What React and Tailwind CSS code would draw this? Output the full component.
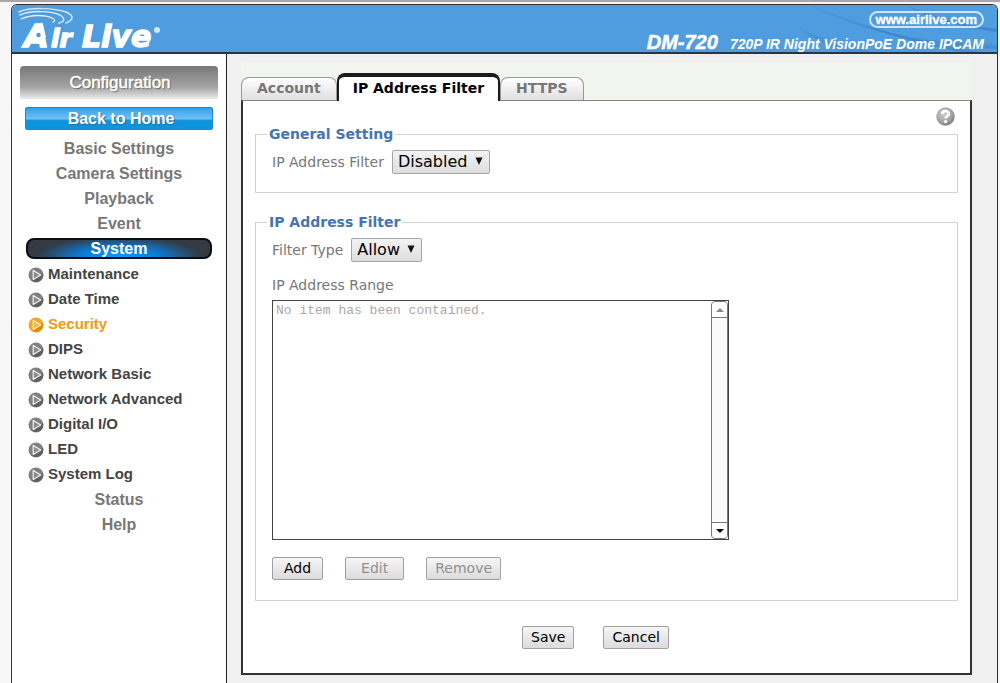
import { useState } from "react";

const SUB_ITEMS = [
  "Maintenance",
  "Date Time",
  "Security",
  "DIPS",
  "Network Basic",
  "Network Advanced",
  "Digital I/O",
  "LED",
  "System Log",
];

function Logo() {
  return (
    <svg viewBox="0 0 150 46" className="h-[46px] w-[150px] overflow-visible" role="img" aria-label="Air Live">
      <g fill="none" stroke="#fff" strokeLinecap="round">
        <path d="M1 7 C12 2 36 3 48 7 C57 11 55 15 48 18" strokeWidth="1.5" opacity="0.75" />
        <path d="M2 10 C14 5 34 6 42 10 C48 14 46 17 41 18" strokeWidth="1.5" opacity="0.8" />
        <path d="M3 14 C14 9 28 10 34 13 C38 15 37 16 35 17" strokeWidth="1.3" opacity="0.85" />
      </g>
      <g fill="#fff" stroke="#fff" strokeWidth="1.4" fontFamily="'DejaVu Sans', Verdana, sans-serif" fontWeight="700" fontStyle="italic">
        <text x="6" y="42" fontSize="32">A</text>
        <text x="33" y="42" fontSize="25">ir</text>
        <text x="64" y="42" fontSize="30">Live</text>
      </g>
      <path d="M15 32 L24 17 L28 32 Z" fill="#fff" />
      <circle cx="20" cy="31" r="5" fill="#fff" />
      <circle cx="20.5" cy="30" r="2.2" fill="#4b97d8" />
      <circle cx="139" cy="25" r="3" fill="#fff" opacity="0.75" />
    </svg>
  );
}

function Header() {
  return (
    <header className="relative flex h-[49px] justify-between border-b-2 border-[#24364a] bg-[#4f9ddf]">
      <svg viewBox="0 0 200 47" className="absolute top-0 right-0 h-[47px] w-[200px]" aria-hidden="true">
        <g fill="#3279c9">
          <path d="M12 0 Q95 34 200 50 L180 50 Q80 32 12 0Z" opacity="0.45" />
          <path d="M108 0 Q150 18 200 24 L200 27 Q145 20 108 0Z" opacity="0.6" />
          <path d="M0 22 Q50 48 110 50 L60 50 Q30 44 0 22Z" opacity="0.3" />
          <path d="M70 21 Q120 38 200 40 L200 44 Q120 42 70 21Z" opacity="0.35" />
        </g>
      </svg>
      <div className="relative pl-[6px]">
        <Logo />
      </div>
      <div className="relative flex flex-col items-end pt-[6px] pr-[13px] font-['Liberation_Sans',Arial,sans-serif] text-white">
        <a
          href="#airlive"
          className="flex h-[17px] items-center rounded-full border-2 border-[#cfe6fa] px-[5px] text-[13px] font-bold [-webkit-text-stroke:0.3px_white]"
        >
          www.airlive.com
        </a>
        <h1 className="flex items-baseline gap-3 font-bold italic">
          <span className="text-[20px] leading-[28px] [-webkit-text-stroke:0.5px_white]">DM-720</span>
          <span className="text-[14px]">720P IR Night VisionPoE Dome IPCAM</span>
        </h1>
      </div>
    </header>
  );
}

function Bullet({ active }) {
  return (
    <svg viewBox="0 0 16 16" className="size-4 shrink-0" aria-hidden="true">
      <circle cx="8" cy="8" r="7.5" fill={active ? "#f9a51c" : "#808080"} />
      <path d="M3 13 A7.5 7.5 0 0 0 13 13 A7.5 7.5 0 0 0 15 6 Z" fill={active ? "#e58a00" : "#606060"} />
      <path d="M5.2 3.4 L12.8 8 L5.2 12.6 Z" fill={active ? "#fbb940" : "#8c8c8c"} stroke="#f1f1f1" strokeWidth="1.2" strokeLinejoin="round" />
    </svg>
  );
}

function MainLink({ children }) {
  return (
    <li>
      <a href="#section" className="flex h-[25px] items-center justify-center text-[16px] font-bold text-[#777]">
        {children}
      </a>
    </li>
  );
}

function Sidebar() {
  return (
    <nav className="w-[215px] shrink-0 border-r border-[#222] bg-white font-['Liberation_Sans',Arial,sans-serif]">
      <div className="mx-2 mt-[12px] flex h-[33px] items-center justify-center rounded-t bg-linear-to-b from-[#777] via-[#a6a6a6] via-65% to-[#ececec] pl-[2px] text-[17px] text-white [-webkit-text-stroke:0.5px_white] [text-shadow:1px_1px_1px_#555]">
        Configuration
      </div>
      <a
        href="#home"
        className="mx-[13px] mt-2 flex h-[23px] items-center justify-center rounded-xs border border-[#1a86d0] bg-linear-to-b from-[#2ba1ec] from-0% via-[#6cc0f2] via-50% to-[#0e94dd] to-60% pl-1 text-[16px] font-bold text-white [text-shadow:1px_1px_1px_#2a6ca0]"
      >
        Back to Home
      </a>
      <ul className="mt-[6px]">
        <MainLink>Basic Settings</MainLink>
        <MainLink>Camera Settings</MainLink>
        <MainLink>Playback</MainLink>
        <MainLink>Event</MainLink>
        <li>
          <div className="flex h-[25px] items-center px-[14px]">
            <a
              href="#system"
              className="flex h-[21px] w-full items-center justify-center rounded-lg border-2 border-[#0a0d12] bg-[radial-gradient(ellipse_45%_120%_at_50%_100%,#0a9bff_0%,#0d78d0_50%,#333a42_100%)] text-[16px] font-bold text-white"
            >
              System
            </a>
          </div>
          <ul className="pt-px">
            {SUB_ITEMS.map((name) => (
              <li key={name}>
                <a
                  href="#item"
                  className={
                    name === "Security"
                      ? "flex h-[25px] items-center gap-1 pl-4 text-[15px] font-bold text-[#f59a0c]"
                      : "flex h-[25px] items-center gap-1 pl-4 text-[15px] font-bold text-[#444]"
                  }
                >
                  <Bullet active={name === "Security"} />
                  {name}
                </a>
              </li>
            ))}
          </ul>
        </li>
        <MainLink>Status</MainLink>
        <MainLink>Help</MainLink>
      </ul>
    </nav>
  );
}

function SelectBox({ id, options }) {
  return (
    <span className="relative inline-flex">
      <select
        id={id}
        className="h-6 appearance-none rounded-xs border border-[#a5a5a5] bg-linear-to-b from-[#f3f3f3] to-[#dedede] pr-[21px] pl-[5px] text-[16px] leading-[22px] text-black"
      >
        {options.map((o) => (
          <option key={o}>{o}</option>
        ))}
      </select>
      <svg viewBox="0 0 8 8" className="pointer-events-none absolute top-[7px] right-[7px] size-2" aria-hidden="true">
        <path d="M0.5 0.5 H7.5 L4 8 Z" fill="#111" />
      </svg>
    </span>
  );
}

const BUTTON_PADDING = { tight: "px-2", normal: "px-[11px]", wide: "px-[15px]" };

function Button({ children, disabled, size = "tight" }) {
  return (
    <button
      type="button"
      disabled={disabled}
      className={`${BUTTON_PADDING[size]} h-[23px] rounded-xs border border-[#a0a0a0] bg-linear-to-b from-[#f6f6f6] to-[#dcdcdc] text-[14px] leading-[21px] text-black disabled:text-[#919191]`}
    >
      {children}
    </button>
  );
}

function Tabs() {
  const [active, setActive] = useState("IP Address Filter");
  return (
    <div role="tablist" className="flex items-end bg-[#f2f4ef] text-[14px] leading-[18px] font-bold">
      {["Account", "IP Address Filter", "HTTPS"].map((name) => (
        <button
          key={name}
          type="button"
          role="tab"
          aria-selected={active === name}
          onClick={() => setActive(name)}
          className={
            active === name
              ? "-mb-px h-[28px] rounded-t-lg border-x-2 border-t-4 border-[#1a1a1a] bg-white px-[14px] pb-[2px] text-black"
              : "h-[23px] rounded-t-lg border border-b-0 border-[#999] bg-linear-to-b from-white to-[#dfdfe3] px-[15px] pb-[2px] text-[#777]"
          }
        >
          {name}
        </button>
      ))}
    </div>
  );
}

function ListBox() {
  return (
    <div className="flex h-[240px] w-[457px] border border-[#444]">
      <select
        id="range"
        size={10}
        className="min-w-0 flex-1 appearance-none overflow-hidden bg-white font-['Liberation_Mono','Courier_New',monospace] text-[13px] text-[#aaa]"
      >
        <option disabled className="px-[3px] py-[2px] text-[#aaa]">
          No item has been contained.
        </option>
      </select>
      <div className="flex w-[17px] flex-col justify-between rounded-sm border border-[#777] bg-[#fafafa]">
        <button type="button" aria-label="Scroll up" className="flex h-4 items-center justify-center rounded-t-sm border-b border-[#777] bg-white">
          <svg viewBox="0 0 8 4" className="h-1 w-2"><path d="M4 0 L8 4 H0 Z" fill="#888" /></svg>
        </button>
        <button type="button" aria-label="Scroll down" className="flex h-4 items-center justify-center rounded-b-sm border-t border-[#777] bg-white">
          <svg viewBox="0 0 8 4" className="h-1 w-2"><path d="M0 0 H8 L4 4 Z" fill="#000" /></svg>
        </button>
      </div>
    </div>
  );
}

function HelpButton() {
  return (
    <button type="button" aria-label="Help" className="mr-[3px] block size-[19px]">
      <svg viewBox="0 0 19 19" className="size-full" aria-hidden="true">
        <defs>
          <radialGradient id="ball" cx="40%" cy="35%" r="65%">
            <stop offset="0" stopColor="#cdcdcd" />
            <stop offset="0.7" stopColor="#a2a2a2" />
            <stop offset="1" stopColor="#808080" />
          </radialGradient>
        </defs>
        <circle cx="9.5" cy="9.5" r="9.2" fill="url(#ball)" />
        <path d="M6.2 7 C6.2 3.2 12.8 3.2 12.8 6.8 C12.8 9.2 9.6 9 9.6 11.6" fill="none" stroke="#fff" strokeWidth="2.6" />
        <circle cx="9.6" cy="14.6" r="1.6" fill="#fff" />
      </svg>
    </button>
  );
}

export default function App() {
  return (
    <div className="flex min-h-screen flex-col border-t-2 border-[#aaa5aa] bg-[#f7f7f7] pt-[2px] pr-[2px] pl-[11px]">
      <div className="flex flex-1 flex-col overflow-hidden rounded-t-md border border-b-0 border-[#333] bg-[#f0f0f0]">
        <Header />
        <div className="flex flex-1">
          <Sidebar />
          <main className="min-w-0 flex-1 pt-2 pr-[25px] pb-[9px] pl-[14px] font-['DejaVu_Sans',Verdana,sans-serif] text-[14px] text-[#777]">
            <div className="bg-[#f2f4ef] pt-[11px]">
              <Tabs />
            </div>
            <section className="border-2 border-t border-[#333] border-t-[#8f857d] bg-white px-3 pt-[6px] pb-6">
              <div className="flex justify-end">
                <HelpButton />
              </div>
              <fieldset className="border border-[#d0d0d0] pb-[18px] pl-4">
                <legend className="-ml-[5px] px-[2px] text-[14px] leading-4 font-bold text-[#4673b4]">General Setting</legend>
                <div className="mt-2 flex items-center gap-2">
                  <label htmlFor="enabled">IP Address Filter</label>
                  <SelectBox id="enabled" options={["Disabled", "Enabled"]} />
                </div>
              </fieldset>
              <fieldset className="mt-[21px] border border-[#d0d0d0] pb-5 pl-4">
                <legend className="-ml-[5px] px-[2px] text-[14px] leading-4 font-bold text-[#4673b4]">IP Address Filter</legend>
                <div className="mt-2 flex items-center gap-2">
                  <label htmlFor="type">Filter Type</label>
                  <SelectBox id="type" options={["Allow", "Deny"]} />
                </div>
                <label htmlFor="range" className="mt-[14px] mb-[6px] block leading-[18px]">
                  IP Address Range
                </label>
                <ListBox />
                <div className="mt-[17px] flex gap-[22px]">
                  <Button size="normal">Add</Button>
                  <Button size="wide" disabled>Edit</Button>
                  <Button disabled>Remove</Button>
                </div>
              </fieldset>
              <div className="mt-[25px] flex justify-center gap-[29px] pr-[22px]">
                <Button>Save</Button>
                <Button>Cancel</Button>
              </div>
            </section>
          </main>
        </div>
      </div>
    </div>
  );
}
